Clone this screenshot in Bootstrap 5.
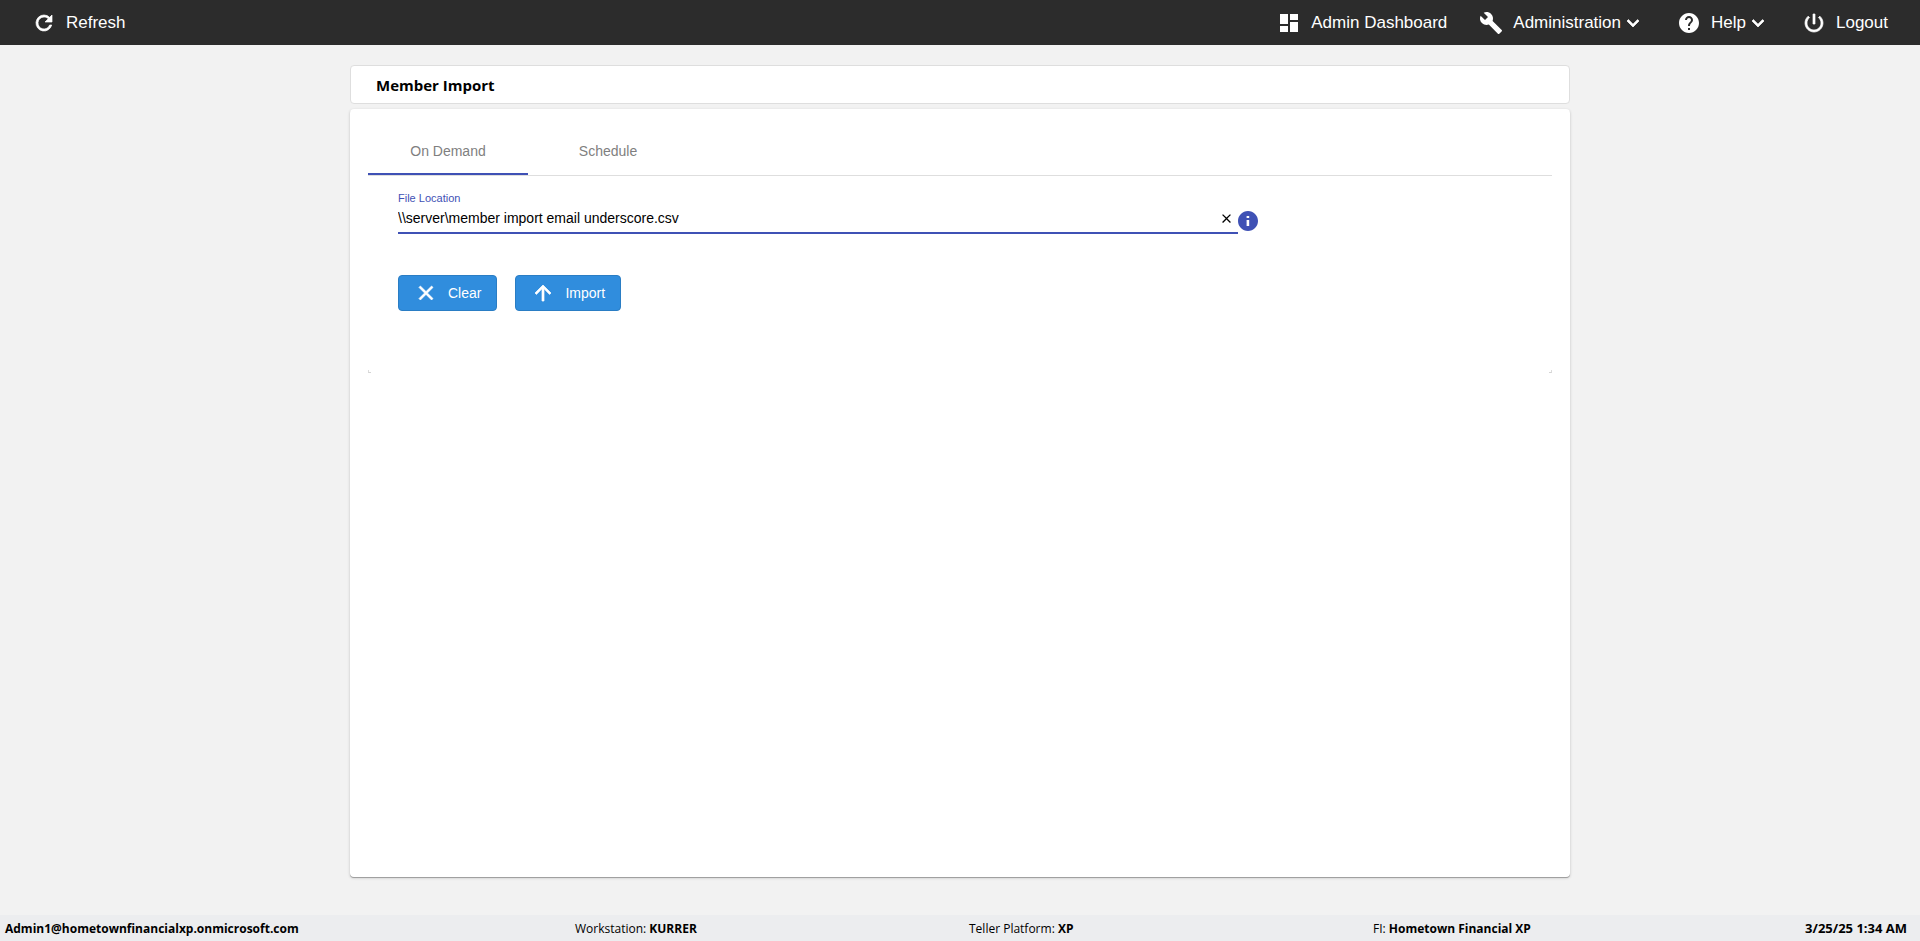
<!DOCTYPE html>
<html lang="en">
<head>
<meta charset="utf-8">
<meta name="viewport" content="width=device-width, initial-scale=1">
<title>Member Import</title>
<link rel="stylesheet" href="https://cdn.jsdelivr.net/npm/bootstrap@5.3.0/dist/css/bootstrap.min.css">
<style>
  :root { --indigo: #3f51b5; --ui: "Liberation Sans", Arial, sans-serif; --segoe: "Segoe UI", "Open Sans", sans-serif; }
  body { background: #f2f2f2; color: #000; font-family: var(--ui); font-size: 14px; line-height: 20px; }
  svg { fill: currentColor; flex: none; display: block; }
  .heavy { stroke: currentColor; stroke-width: .7; }
  .topbar { background: #2c2c2c; min-height: 45px; padding: 0 16px; }
  .topbar .nav-link { color: #fff; font-size: 17px; line-height: 24px; padding: 0 16px; gap: 10px; }
  .page-column { max-width: 1220px; padding-bottom: 38px; }
  .title-box { border: 1px solid #dedede; border-radius: 4px; margin: 20px 0 5px; padding: 1px 25px 0; }
  .title-box h1 { font: 700 15px/36px var(--segoe); }
  .main-box { border-radius: 4px; padding: 18px; box-shadow: 0 1px 0 #a0a0a0, 0 1px 3px rgba(0,0,0,.22); }
  .tab-row { border-bottom: 1px solid #dedede; }
  .tab-row .nav-link { width: 160px; height: 48px; padding: 2px 0 0; border: 0; border-radius: 0; border-bottom: 2px solid transparent; color: #7f7f7f; background: none; }
  .tab-row .nav-link.active { border-bottom-color: var(--indigo); }
  .tab-panel { position: relative; padding: 12px 30px 62px; }
  .tab-panel::before, .tab-panel::after { content: ""; position: absolute; bottom: 0; width: 3px; height: 3px; border-bottom: 1px solid #d4d4d4; }
  .tab-panel::before { left: 0; border-left: 1px solid #dcdcdc; }
  .tab-panel::after { right: 0; border-right: 1px solid #dcdcdc; }
  .file-field { flex: 0 1 840px; border-bottom: 2px solid var(--indigo); padding-bottom: 4px; }
  .file-field label { color: var(--indigo); font-size: 11px; line-height: 20px; }
  .file-field input { border: 0; outline: 0; padding: 0; height: 20px; min-width: 0; background: none; color: #000; line-height: 20px; }
  .plain-btn { border: 0; background: none; padding: 0; }
  .info-btn { color: var(--indigo); margin: 0 0 1px -2px; }
  .button-row { gap: 18px; margin-top: 41px; }
  .action-btn { --bs-btn-color: #fff; --bs-btn-bg: #308ddd; --bs-btn-border-color: #2a7dc4; --bs-btn-hover-color: #fff; --bs-btn-hover-bg: #277fcb; --bs-btn-border-radius: 4px; --bs-btn-padding-x: 15px; --bs-btn-padding-y: 0; --bs-btn-font-size: 14px; height: 36px; gap: 10px; }
  .status-bar { display: grid; grid-template-columns: 570fr 394fr 404fr 534fr; background: #ecedef; padding: 1px 13px 0 5px; font: 12px/25px var(--segoe); }
  .clock { font-size: 13px; }
</style>
</head>
<body class="min-vh-100 d-flex flex-column">
<nav class="topbar navbar d-flex align-items-center justify-content-between" aria-label="Main">
  <a class="nav-link d-flex align-items-center" href="#">
    <svg class="heavy" width="24" height="24" viewBox="0 0 24 24" aria-hidden="true"><path d="M17.65 6.35A7.96 7.96 0 0 0 12 4a8 8 0 1 0 7.73 10h-2.08A6 6 0 1 1 12 6c1.66 0 3.14.69 4.22 1.78L13 11h7V4z"/></svg>
    Refresh</a>
  <div class="d-flex">
    <a class="nav-link d-flex align-items-center" href="#">
      <svg width="24" height="24" viewBox="0 0 24 24" aria-hidden="true"><path d="M3 13h8V3H3zm0 8h8v-6H3zm10 0h8V11h-8zm0-18v6h8V3z"/></svg>
      Admin Dashboard</a>
    <a class="nav-link d-flex align-items-center" href="#">
      <svg width="24" height="24" viewBox="0 0 24 24" aria-hidden="true"><path d="M22.7 19l-9.1-9.1c.9-2.3.4-5-1.5-6.9-2-2-5-2.4-7.4-1.3L9 6 6 9 1.6 4.7C.4 7.1.9 10.1 2.9 12.1c1.9 1.9 4.6 2.4 6.9 1.5l9.1 9.1c.4.4 1 .4 1.4 0l2.3-2.3c.5-.4.5-1.1.1-1.4z"/></svg>
      <span class="d-flex align-items-center">Administration<svg class="heavy" width="24" height="24" viewBox="0 0 24 24" aria-hidden="true"><path d="M16.59 8.59L12 13.17 7.41 8.59 6 10l6 6 6-6z"/></svg></span></a>
    <a class="nav-link d-flex align-items-center" href="#">
      <svg width="24" height="24" viewBox="0 0 24 24" aria-hidden="true"><path d="M12 2C6.48 2 2 6.48 2 12s4.48 10 10 10 10-4.48 10-10S17.52 2 12 2zm1 17h-2v-2h2v2zm2.07-7.75l-.9.92C13.45 12.9 13 13.5 13 15h-2v-.5c0-1.1.45-2.1 1.17-2.83l1.24-1.26c.37-.36.59-.86.59-1.41 0-1.1-.9-2-2-2s-2 .9-2 2H8c0-2.21 1.79-4 4-4s4 1.79 4 4c0 .88-.36 1.68-.93 2.25z"/></svg>
      <span class="d-flex align-items-center">Help<svg class="heavy" width="24" height="24" viewBox="0 0 24 24" aria-hidden="true"><path d="M16.59 8.59L12 13.17 7.41 8.59 6 10l6 6 6-6z"/></svg></span></a>
    <a class="nav-link d-flex align-items-center" href="#">
      <svg class="heavy" width="24" height="24" viewBox="0 0 24 24" aria-hidden="true"><path d="M13 3h-2v10h2V3zm4.83 2.17l-1.42 1.42C17.99 7.86 19 9.81 19 12c0 3.87-3.13 7-7 7s-7-3.13-7-7c0-2.19 1.01-4.14 2.58-5.42L6.17 5.17C4.23 6.82 3 9.26 3 12c0 4.97 4.03 9 9 9s9-4.03 9-9c0-2.74-1.23-5.18-3.17-6.83z"/></svg>
      Logout</a>
  </div>
</nav>

<main class="page-column w-100 mx-auto d-flex flex-column flex-grow-1">
  <header class="title-box bg-white"><h1 class="m-0">Member Import</h1></header>
  <section class="main-box bg-white flex-grow-1">
    <div class="tab-row nav" role="tablist">
      <button class="nav-link active" type="button" role="tab" id="demand-tab" data-bs-toggle="tab" data-bs-target="#demand" aria-controls="demand" aria-selected="true">On Demand</button>
      <button class="nav-link" type="button" role="tab" aria-selected="false">Schedule</button>
    </div>
    <div class="tab-panel" id="demand" role="tabpanel" aria-labelledby="demand-tab">
      <div class="d-flex align-items-end">
        <div class="file-field">
          <label class="d-block" for="file-location">File Location</label>
          <div class="d-flex align-items-center">
            <input class="flex-grow-1" type="text" id="file-location" value="\\server\member import email underscore.csv">
            <button class="plain-btn me-1" type="button" aria-label="Clear file location"><svg width="15" height="15" viewBox="0 0 24 24" aria-hidden="true"><path d="M19 6.41L17.59 5 12 10.59 6.41 5 5 6.41 10.59 12 5 17.59 6.41 19 12 13.41 17.59 19 19 17.59 13.41 12z"/></svg></button>
          </div>
        </div>
        <button class="plain-btn info-btn" type="button" aria-label="About file location"><svg width="24" height="24" viewBox="0 0 24 24" aria-hidden="true"><path d="M12 2C6.48 2 2 6.48 2 12s4.48 10 10 10 10-4.48 10-10S17.52 2 12 2zm1.2 15h-2.6v-6h2.6v6zm0-8h-2.6V7h2.6v2z"/></svg></button>
      </div>
      <div class="button-row d-flex">
        <button class="btn action-btn d-flex align-items-center" type="button"><svg class="heavy" width="24" height="24" viewBox="0 0 24 24" aria-hidden="true"><path d="M19 6.41L17.59 5 12 10.59 6.41 5 5 6.41 10.59 12 5 17.59 6.41 19 12 13.41 17.59 19 19 17.59 13.41 12z"/></svg>Clear</button>
        <button class="btn action-btn d-flex align-items-center" type="button"><svg class="heavy" width="24" height="24" viewBox="0 0 24 24" aria-hidden="true"><path d="M4 12l1.41 1.41L11 7.83V20h2V7.83l5.58 5.59L20 12l-8-8z"/></svg>Import</button>
      </div>
    </div>
  </section>
</main>

<footer class="status-bar">
  <strong>Admin1@hometownfinancialxp.onmicrosoft.com</strong>
  <span>Workstation: <strong>KURRER</strong></span>
  <span>Teller Platform: <strong>XP</strong></span>
  <div class="d-flex justify-content-between"><span>FI: <strong>Hometown Financial XP</strong></span><strong class="clock">3/25/25 1:34 AM</strong></div>
</footer>
<script src="https://cdn.jsdelivr.net/npm/bootstrap@5.3.0/dist/js/bootstrap.bundle.min.js"></script>
</body>
</html>
